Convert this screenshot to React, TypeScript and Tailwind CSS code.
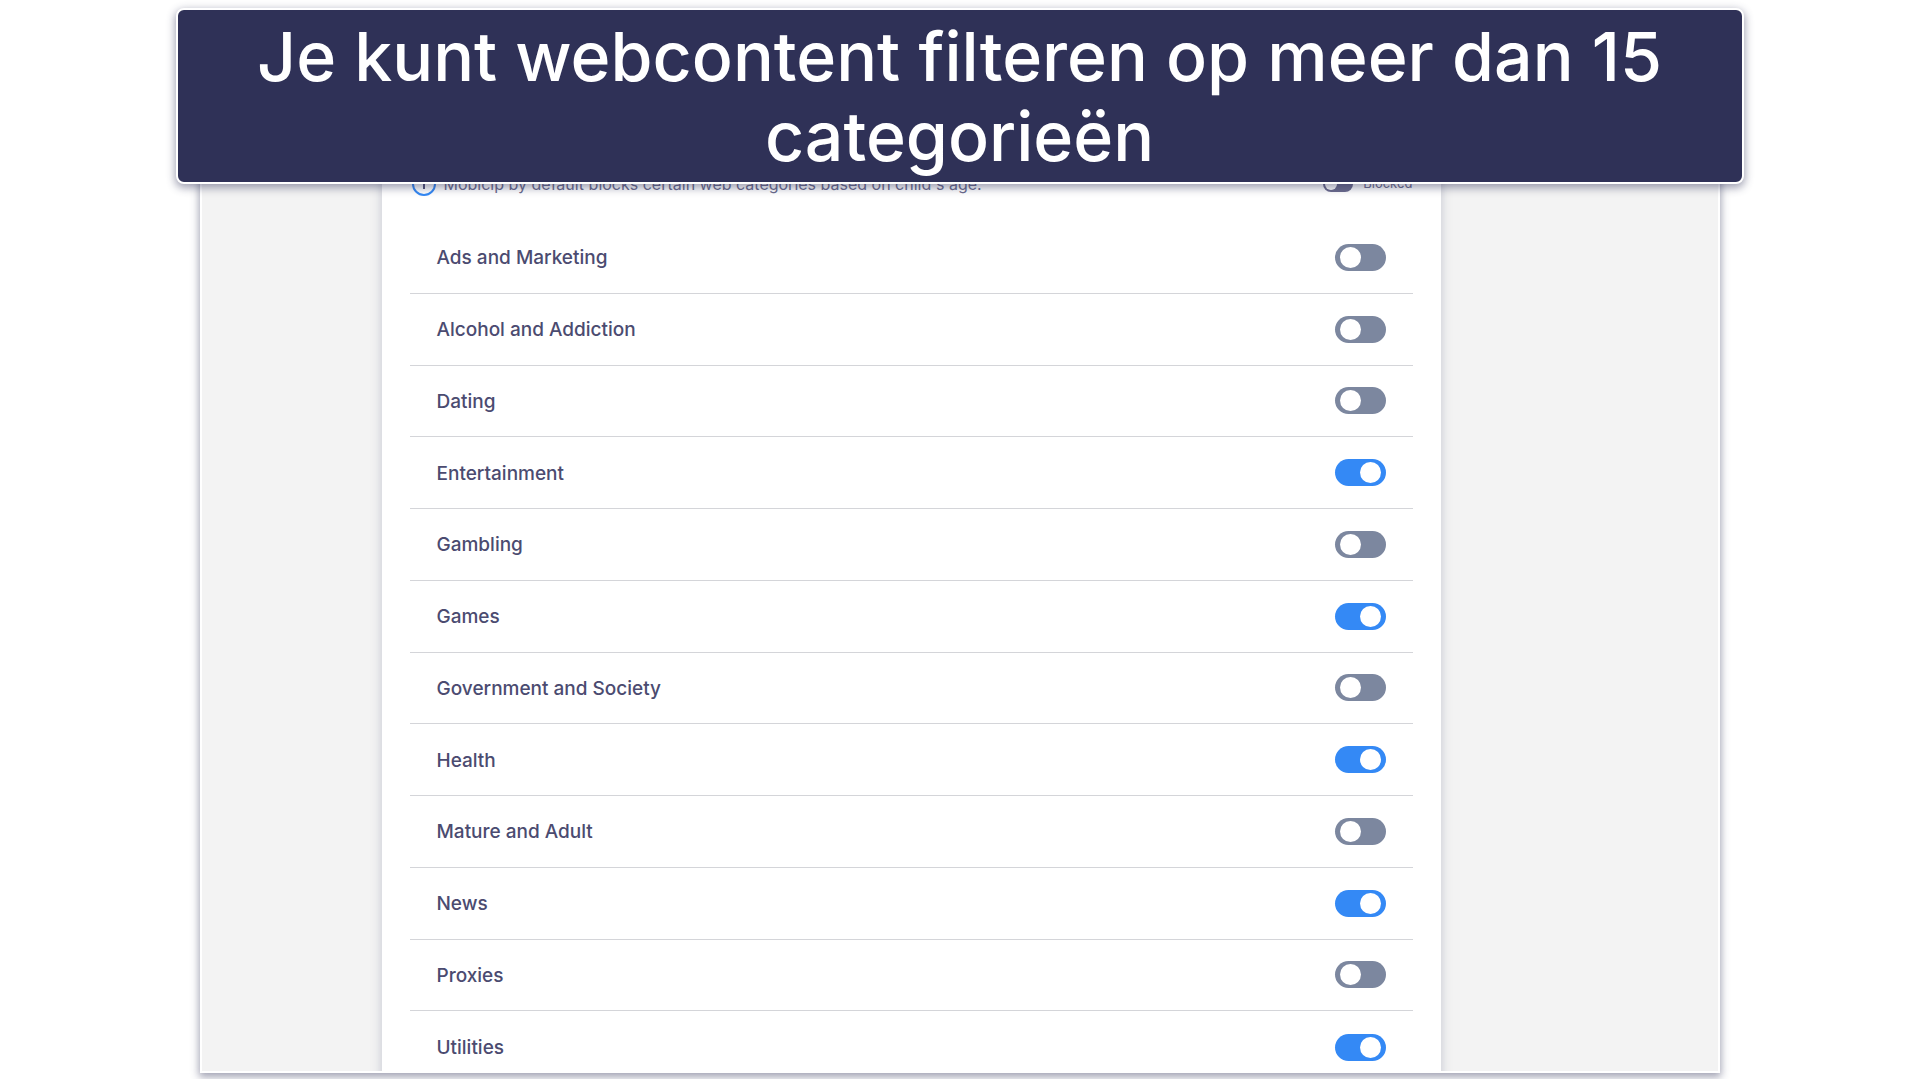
import { useState } from "react";

type Category = {
  id: string;
  title: string;
  allowed: boolean;
};

const initialCategories: Category[] = [
  { id: "ads", title: "Ads and Marketing", allowed: false },
  { id: "alcohol", title: "Alcohol and Addiction", allowed: false },
  { id: "dating", title: "Dating", allowed: false },
  { id: "entertainment", title: "Entertainment", allowed: true },
  { id: "gambling", title: "Gambling", allowed: false },
  { id: "games", title: "Games", allowed: true },
  { id: "government", title: "Government and Society", allowed: false },
  { id: "health", title: "Health", allowed: true },
  { id: "mature", title: "Mature and Adult", allowed: false },
  { id: "news", title: "News", allowed: true },
  { id: "proxies", title: "Proxies", allowed: false },
  { id: "utilities", title: "Utilities", allowed: true },
];

function InfoIcon() {
  return (
    <svg width="24" height="24" viewBox="0 0 24 24" fill="none" stroke="#3489f5" strokeWidth="2">
      <circle cx="12" cy="12" r="11" />
      <path d="M12 11v6M12 7v1" stroke="#53537a" />
    </svg>
  );
}

export default function App() {
  const [categories, setCategories] = useState(initialCategories);

  const toggle = (id: string) =>
    setCategories((list) =>
      list.map((c) => (c.id === id ? { ...c, allowed: !c.allowed } : c))
    );

  return (
    <div className="flex h-screen flex-col bg-white px-4 pt-2 pb-1.5 font-['Inter',sans-serif]">

      {/* Banner */}

      <h1 className="relative z-10 mx-auto w-full max-w-[1568px] rounded-lg border-2 border-white bg-[#2f3157] px-16 py-1.5 text-center text-[68px] leading-[80px] font-medium text-white shadow-[0_3px_8px_1px_rgba(47,49,87,0.45)]">
        Je kunt webcontent filteren op meer dan 15 categorieën
      </h1>

      <main className="mx-auto -mt-10 flex min-h-0 w-full max-w-[1520px] flex-1 overflow-hidden border-2 border-white bg-[#f3f3f3] pr-[277px] pl-[180px] shadow-[0_3px_8px_1px_rgba(47,49,87,0.45)]">
        <section className="flex-1 self-start bg-white px-7 pt-[26px] shadow-[0_0_9px_1px_rgba(150,155,175,0.45)]">

          {/* Legend */}

          <div className="flex items-center justify-between pb-[26px] text-base text-[#6b6b8d]">
            <p className="flex items-center gap-2 pl-0.5">
              <InfoIcon />
              Mobicip by default blocks certain web categories based on child's age.
            </p>
            <p className="flex items-center gap-2.5 text-[13px]">
              <span className="flex h-4 w-[30px] items-center rounded-full bg-[#6b6b8d] px-0.5">
                <span className="size-3 rounded-full bg-white" />
              </span>
              Blocked
            </p>
          </div>

          {/* Categories */}

          <ul className="grid min-h-[861px] auto-rows-fr divide-y divide-[#d4d5d9]">
            {categories.map((c) => (
              <li key={c.id} className="flex items-center justify-between px-[27px]">
                <label htmlFor={c.id} className="pt-0.5 text-[19px] leading-7 font-medium text-[#4b4b70]">
                  {c.title}
                </label>
                <input
                  id={c.id}
                  type="checkbox"
                  role="switch"
                  checked={c.allowed}
                  onChange={() => toggle(c.id)}
                  className="flex h-[27px] w-[51px] cursor-pointer appearance-none items-center rounded-full bg-[#7c879f] px-[5px] before:size-[21px] before:rounded-full before:bg-white checked:justify-end checked:bg-[#3489f5]"
                />
              </li>
            ))}
          </ul>

        </section>
      </main>

    </div>
  );
}
